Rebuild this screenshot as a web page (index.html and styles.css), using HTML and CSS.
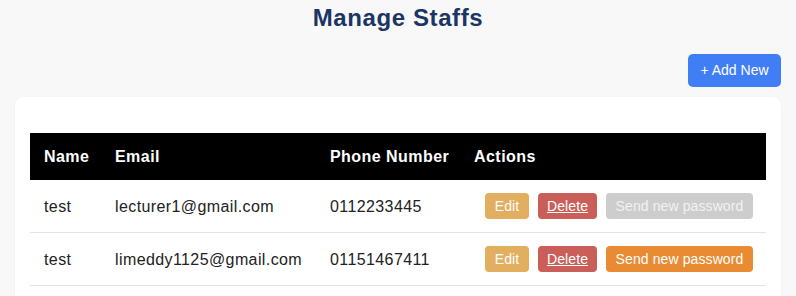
FILE: index.html
```html
<!DOCTYPE html>
<html lang="en">
<head>
<meta charset="utf-8">
<title>Manage Staffs</title>
<link rel="stylesheet" href="styles.css">
</head>
<body>
<div class="page">
  <h1 class="title">Manage Staffs</h1>
  <div class="toolbar">
    <button class="btn-add" type="button">+ Add New</button>
  </div>
  <div class="card">
    <table class="staff-table">
      <colgroup>
        <col class="col-name">
        <col class="col-email">
        <col class="col-phone">
        <col class="col-actions">
      </colgroup>
      <thead>
        <tr>
          <th>Name</th>
          <th>Email</th>
          <th>Phone Number</th>
          <th>Actions</th>
        </tr>
      </thead>
      <tbody>
        <tr>
          <td>test</td>
          <td>lecturer1@gmail.com</td>
          <td>0112233445</td>
          <td>
            <div class="actions">
              <button class="btn btn-edit" type="button">Edit</button>
              <a class="btn btn-delete" href="#">Delete</a>
              <button class="btn btn-send is-disabled" type="button" disabled>Send new password</button>
            </div>
          </td>
        </tr>
        <tr>
          <td>test</td>
          <td>limeddy1125@gmail.com</td>
          <td>01151467411</td>
          <td>
            <div class="actions">
              <button class="btn btn-edit" type="button">Edit</button>
              <a class="btn btn-delete" href="#">Delete</a>
              <button class="btn btn-send" type="button">Send new password</button>
            </div>
          </td>
        </tr>
      </tbody>
    </table>
  </div>
</div>
</body>
</html>
```
FILE: styles.css
```css
* { box-sizing: border-box; }

html, body {
  margin: 0;
  padding: 0;
  background: #f8f8f9;
  font-family: "Liberation Sans", Arial, sans-serif;
  color: #222;
}

.page {
  padding: 0 15px;
}

.title {
  margin: 4px 0 0;
  font-size: 24px;
  line-height: 28px;
  font-weight: 700;
  letter-spacing: 0.6px;
  text-align: center;
  color: #1b3565;
}

.toolbar {
  display: flex;
  justify-content: flex-end;
  margin-top: 22px;
}

.btn-add {
  border: 0;
  border-radius: 5px;
  background: #3f7ef5;
  color: #fff;
  font-family: inherit;
  font-size: 14px;
  line-height: 17px;
  padding: 8px 12px;
  width: 93px;
}

.card {
  margin-top: 10px;
  background: #fff;
  border-radius: 8px;
  padding: 36px 15px 15px;
  box-shadow: 0 1px 3px rgba(0, 0, 0, 0.05);
  min-height: 220px;
}

.staff-table {
  width: 100%;
  border-collapse: collapse;
  table-layout: fixed;
  font-size: 16px;
}

.col-name { width: 71px; }
.col-email { width: 215px; }
.col-phone { width: 144px; }
.col-actions { width: auto; }

.staff-table th {
  background: #000;
  color: #fff;
  text-align: left;
  font-weight: 700;
  line-height: 19px;
  letter-spacing: 0.45px;
  padding: 14px 14px;
  white-space: nowrap;
}

.staff-table td {
  padding: 13px 14px;
  line-height: 19px;
  letter-spacing: 0.4px;
  vertical-align: middle;
  border-bottom: 1px solid #e3e3e3;
  white-space: nowrap;
}

.actions {
  display: flex;
  gap: 9px;
  padding-left: 11px;
  letter-spacing: 0;
}

.btn {
  display: inline-flex;
  align-items: center;
  justify-content: center;
  height: 26px;
  padding: 0 10px;
  border: 0;
  border-radius: 4px;
  font-family: inherit;
  font-size: 14px;
  letter-spacing: 0.1px;
  color: #fff;
  text-decoration: none;
}

.btn-edit { background: #e2ae60; width: 44px; }
.btn-delete { background: #c95f58; text-decoration: underline; width: 59px; }
.btn-send { background: #e98b33; width: 147px; }
.btn-send.is-disabled { background: #cdcdcd; color: #f2f2f2; }
```
